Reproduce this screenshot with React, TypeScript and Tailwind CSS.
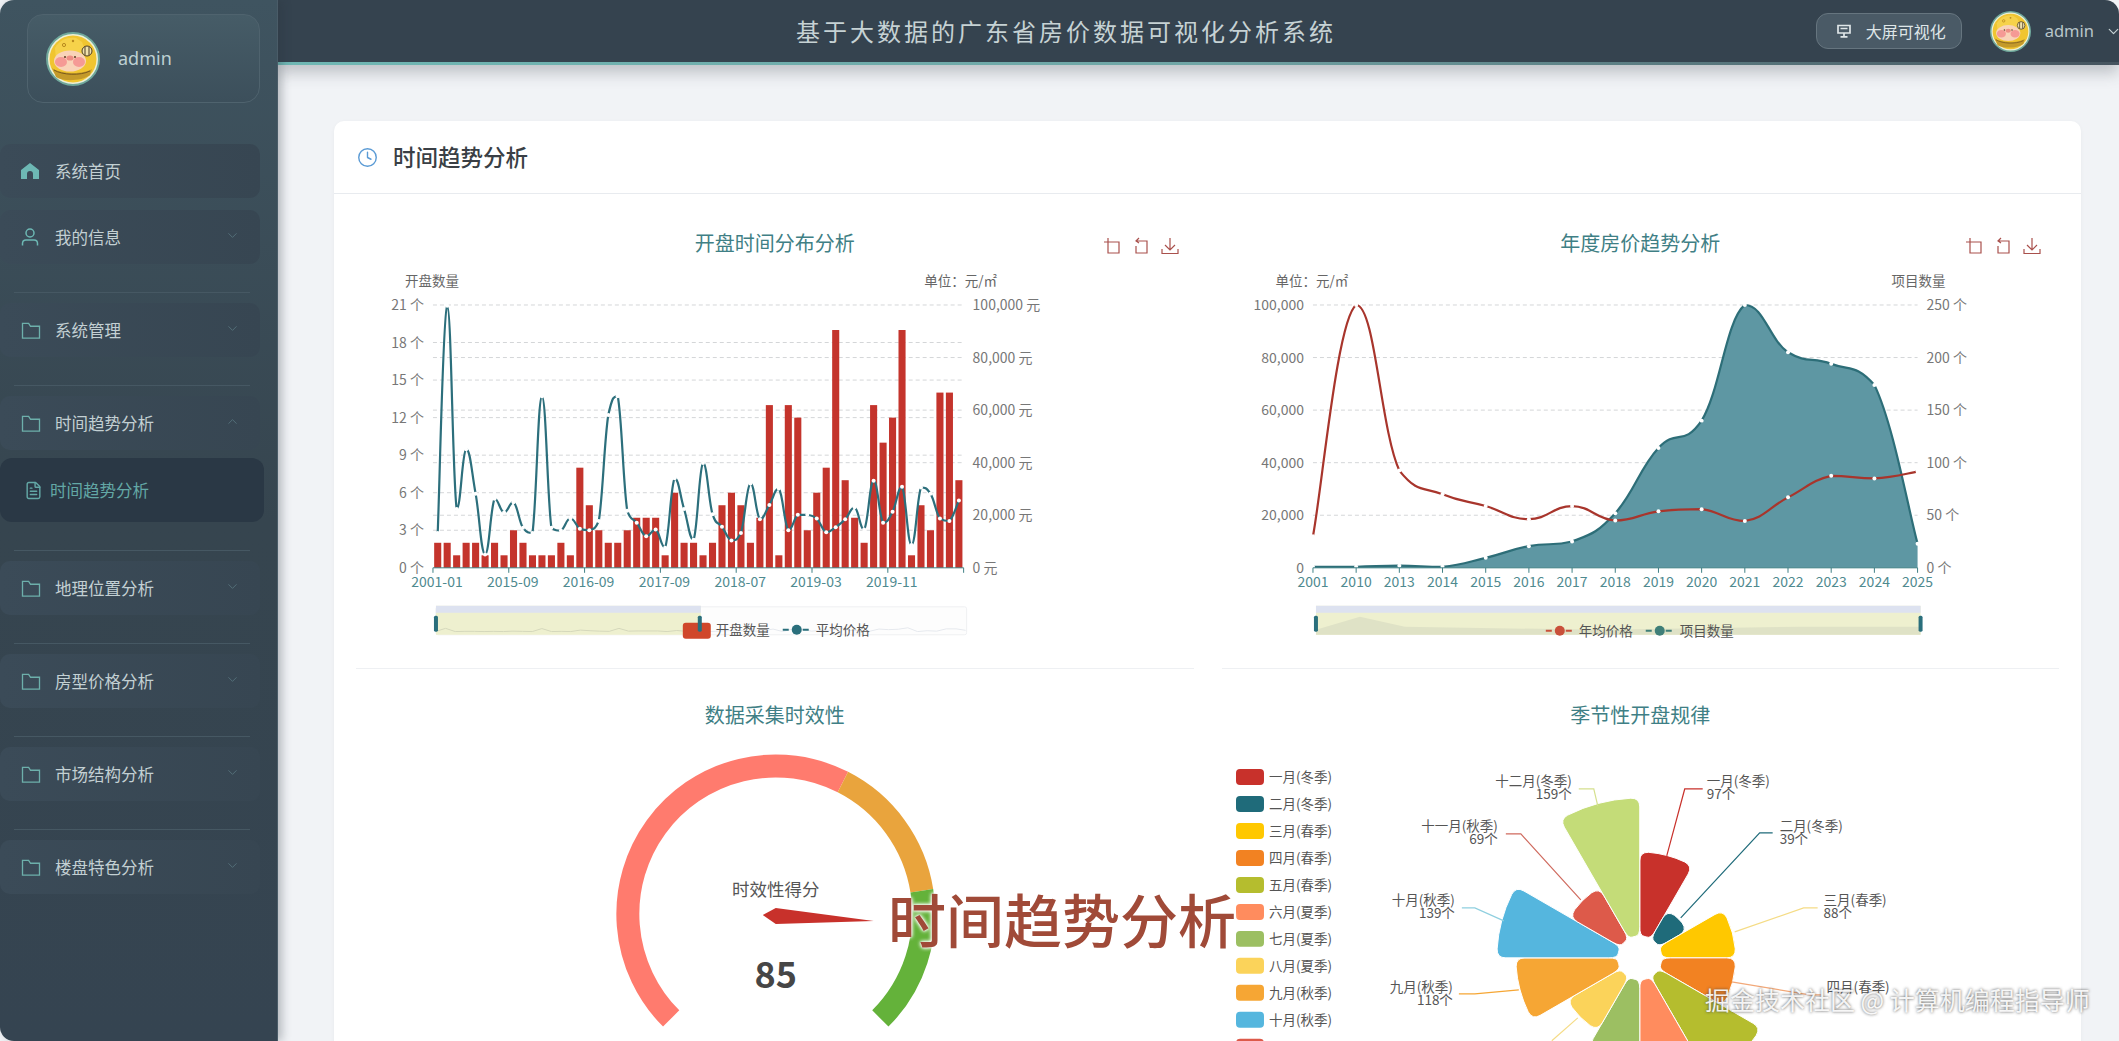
import { ChevronDown, ChevronUp, Clock, FileText } from "lucide-react";

type Pt = [number, number];

const clamp = (v: number, a: number, b: number) => Math.min(Math.max(a, b), Math.max(Math.min(a, b), v));

// catmull-rom, control points held between neighbours so peaks don't overshoot
function smoothPath(pts: Pt[], t = 0.22) {
  let d = `M${pts[0][0]} ${pts[0][1]}`;
  for (let i = 0; i < pts.length - 1; i++) {
    const p0 = pts[Math.max(i - 1, 0)];
    const p1 = pts[i];
    const p2 = pts[i + 1];
    const p3 = pts[Math.min(i + 2, pts.length - 1)];
    const c1x = p1[0] + (p2[0] - p0[0]) * t;
    const c1y = clamp(p1[1] + (p2[1] - p0[1]) * t, p1[1], p2[1]);
    const c2x = p2[0] - (p3[0] - p1[0]) * t;
    const c2y = clamp(p2[1] - (p3[1] - p1[1]) * t, p1[1], p2[1]);
    d += ` C${c1x} ${c1y} ${c2x} ${c2y} ${p2[0]} ${p2[1]}`;
  }
  return d;
}

const TOP = 305;
const BOTTOM = 568;

const bars = [2, 2, 1, 2, 2, 1, 2, 1, 3, 2, 1, 1, 1, 2, 1, 8, 5, 3, 2, 2, 3, 4, 4, 4, 1, 6, 2, 2, 1, 2, 5, 6, 5, 2, 4, 13, 1, 13, 12, 3, 6, 8, 19, 7, 4, 2, 13, 10, 12, 19, 1, 5, 3, 14, 14, 7];
const priceRaw = [1205, 540, 1135, 960, 1090, 1268, 1105, 1145, 1115, 1190, 1205, 805, 1190, 1198, 1162, 1193, 1197, 1170, 860, 805, 1140, 1175, 1215, 1195, 1248, 1045, 1135, 1225, 1000, 1150, 1187, 1227, 1205, 1060, 1165, 1123, 1075, 1197, 1152, 1152, 1163, 1203, 1188, 1165, 1130, 1195, 1052, 1175, 1143, 1070, 1240, 1072, 1090, 1163, 1170, 1110];
const leftTicks = ["21 个", "18 个", "15 个", "12 个", "9 个", "6 个", "3 个", "0 个"];
const rightTicks = ["100,000 元", "80,000 元", "60,000 元", "40,000 元", "20,000 元", "0 元"];
const monthLabels = ["2001-01", "2015-09", "2016-09", "2017-09", "2018-07", "2019-03", "2019-11"];

const years = ["2001", "2010", "2013", "2014", "2015", "2016", "2017", "2018", "2019", "2020", "2021", "2022", "2023", "2024", "2025"];
const yearPrice = [12, 100, 37, 28, 23.5, 18.5, 23.5, 18, 21.5, 22.3, 17.8, 26.8, 35, 34, 36.6];
const yearCount = [1, 1, 2, 1, 9.5, 20.6, 25, 52, 114, 140, 250, 205, 194, 174, 23];

const roseData = [
  { name: "一月(冬季)", r: 106, color: "#c8312b" },
  { name: "二月(冬季)", r: 55, color: "#1f6b7a" },
  { name: "三月(春季)", r: 96, color: "#ffc800" },
  { name: "四月(春季)", r: 96, color: "#f28222" },
  { name: "五月(春季)", r: 140, color: "#b5bd2e" },
  { name: "六月(夏季)", r: 112, color: "#ff8c5e" },
  { name: "七月(夏季)", r: 102, color: "#9cbf62" },
  { name: "八月(夏季)", r: 84, color: "#fbd35a" },
  { name: "九月(秋季)", r: 124, color: "#f6a634" },
  { name: "十月(秋季)", r: 143, color: "#55b6de" },
  { name: "十一月(秋季)", r: 81, color: "#dd5a4a" },
  { name: "十二月(冬季)", r: 160, color: "#c4dc78" },
];

const roseLabels = [
  { line: "1667,856 1685,789 1703,789", color: "#c8312b", x: 1707, y: 786, anchor: "start", a: "一月(冬季)", b: "97个" },
  { line: "1681,918 1760,833 1773,833", color: "#1f6b7a", x: 1780, y: 831, anchor: "start", a: "二月(冬季)", b: "39个" },
  { line: "1735,932 1804,908 1818,908", color: "#f5dc86", x: 1824, y: 905, anchor: "start", a: "三月(春季)", b: "88个" },
  { line: "1732,982 1810,995 1822,995", color: "#f2a878", x: 1827, y: 992, anchor: "start", a: "四月(春季)", b: "" },
  { line: "1519,990 1475,994 1459,994", color: "#f6a634", x: 1453, y: 992, anchor: "end", a: "九月(秋季)", b: "118个" },
  { line: "1504,921 1475,908 1462,908", color: "#8fcfdf", x: 1455, y: 905, anchor: "end", a: "十月(秋季)", b: "139个" },
  { line: "1581,900 1521,834 1506,834", color: "#cf6a5e", x: 1498, y: 831, anchor: "end", a: "十一月(秋季)", b: "69个" },
  { line: "1598,806 1594,789 1579,789", color: "#d5e08e", x: 1572, y: 786, anchor: "end", a: "十二月(冬季)", b: "159个" },
];

const menu = [
  { label: "地理位置分析" },
  { label: "房型价格分析" },
  { label: "市场结构分析" },
  { label: "楼盘特色分析" },
];

function Avatar({ className }: { className: string }) {
  return (
    <svg viewBox="0 0 54 54" className={className}>
      <circle cx="27" cy="27" r="26" fill="#eef0d6" stroke="#6fa89c" strokeWidth="2" />
      <circle cx="27" cy="27" r="23.5" fill="#f0c530" />
      <path d="M9 16C14 7 22 5 30 6l6 4 4 10-2 8H10z" fill="#f6d24a" />
      <circle cx="18" cy="13" r="1.6" fill="none" stroke="#b98a1e" />
      <circle cx="27" cy="9" r="1.2" fill="#b98a1e" />
      <path d="M6 36c8 6 30 7 40 1l-2 6c-8 6-26 7-34 2z" fill="#c49a2a" />
      <path d="M8 38c8 5 26 6 36 1" fill="none" stroke="#7a5a1c" strokeWidth="1" />
      <ellipse cx="24" cy="29" rx="16" ry="10.5" fill="#f9d3b8" />
      <ellipse cx="15" cy="30" rx="6" ry="5" fill="#f59a95" />
      <ellipse cx="33" cy="30" rx="6" ry="5" fill="#f59a95" />
      <ellipse cx="24" cy="26" rx="3.6" ry="2.6" fill="#ee8f85" />
      <circle cx="19" cy="25" r="1" fill="#5a3a22" />
      <circle cx="29" cy="25" r="1" fill="#5a3a22" />
      <circle cx="41" cy="19" r="5" fill="#f0e2ac" stroke="#4a3a22" />
      <path d="M39 15v8M43 15v8" stroke="#4a3a22" />
    </svg>
  );
}

function FolderIcon() {
  return (
    <svg viewBox="0 0 20 18" className="h-[17px] w-[20px] shrink-0" fill="none" stroke="#6db0ab" strokeWidth="1.4">
      <path d="M1 1.5h6.5l2 3H19v12.5H1z" />
    </svg>
  );
}

function MenuItem({ label, icon, open, arrow = true }: { label: string; icon: React.ReactNode; open?: boolean; arrow?: boolean }) {
  return (
    <div className="flex h-[54px] w-[260px] items-center rounded-[10px] bg-gradient-to-r from-[#3b4b58] to-[#374652] pl-[21px] pr-[20px] text-[16.5px] text-[#c3d0d3]">
      <span className="flex w-[34px] shrink-0 items-center">{icon}</span>
      <span className="flex-1">{label}</span>
      {arrow &&
        (open ? (
          <ChevronUp size={15} strokeWidth={1.5} className="mb-[4px] text-[#54707a]" />
        ) : (
          <ChevronDown size={15} strokeWidth={1.5} className="mb-[4px] text-[#54707a]" />
        ))}
    </div>
  );
}

function Divider() {
  return <div className="mb-[10px] ml-[14px] h-px w-[236px] bg-[#465863]" />;
}

function Sidebar() {
  return (
    <aside className="z-20 flex h-full w-[278px] shrink-0 flex-col rounded-l-[14px] border-r border-[#4a5c68] bg-gradient-to-b from-[#3f5460] via-[#36454f] to-[#354451] pt-[14px] shadow-[4px_0_10px_rgba(40,50,60,0.3)]">
      <div className="ml-[27px] flex h-[89px] w-[233px] items-center gap-[18px] rounded-2xl border border-[#4f636e] bg-gradient-to-b from-[#465c67] to-[#3c4f5b] pl-[18px]">
        <Avatar className="h-[54px] w-[54px]" />
        <span className="font-['Noto_Sans',sans-serif] text-[18px] text-[#bdd0d3]">admin</span>
      </div>
      <div className="mt-[41px] flex flex-col">
        <MenuItem
          label="系统首页"
          arrow={false}
          icon={
            <svg viewBox="0 0 18 16" className="h-[16px] w-[18px]" fill="#6db8b4">
              <path d="M9 0l9 7v9h-6v-5a3 3 0 0 0-6 0v5H0V7z" />
            </svg>
          }
        />
        <div className="h-[12px]" />
        <MenuItem
          label="我的信息"
          icon={
            <svg viewBox="0 0 18 18" className="h-[18px] w-[18px]" fill="none" stroke="#6db8b4" strokeWidth="1.5">
              <circle cx="9" cy="5" r="4" />
              <path d="M1.5 17.5v-2c0-2 1.5-3.5 3.5-3.5h8c2 0 3.5 1.5 3.5 3.5v2" />
            </svg>
          }
        />
        <div className="h-[28px]" />
        <Divider />
        <MenuItem label="系统管理" icon={<FolderIcon />} />
        <div className="h-[28px]" />
        <Divider />
        <MenuItem label="时间趋势分析" open icon={<FolderIcon />} />
        <div className="mt-[8px] flex h-[64px] w-[264px] items-center rounded-xl bg-[#2a3845] pl-[24px] text-[16.5px] text-[#63a8a6]">
          <FileText size={19} strokeWidth={1.8} className="mr-[7px]" />
          时间趋势分析
        </div>
        <div className="h-[28px]" />
        {menu.map((m) => (
          <div key={m.label}>
            <Divider />
            <MenuItem label={m.label} icon={<FolderIcon />} />
            <div className="h-[28px]" />
          </div>
        ))}
      </div>
    </aside>
  );
}

function Header() {
  return (
    <header className="z-10 shrink-0 shadow-[0_8px_14px_rgba(60,70,80,0.28)]">
      <div className="flex h-[62px] items-center rounded-tr-[14px] bg-[#35434f] pl-[518px]">
        <h1 className="flex-1 text-[24px] tracking-[3px] text-[#c6d2d4]">基于大数据的广东省房价数据可视化分析系统</h1>
        <div className="flex h-[36px] w-[146px] items-center rounded-xl border border-[#66757f] bg-[#4a5a66] pl-[20px] text-[16px] text-[#dfe6e8]">
          <svg viewBox="0 0 14 14" className="mr-[15px] h-[14px] w-[14px]" fill="none" stroke="#dfe6e8" strokeWidth="1.7">
            <path d="M1 1.5h12v7.5H1zM7 9v4M3.5 12.8h7M3.5 4.5h7" />
          </svg>
          大屏可视化
        </div>
        <Avatar className="ml-[28px] h-[41px] w-[41px]" />
        <span className="ml-[14px] font-['Noto_Sans',sans-serif] text-[16.5px] text-[#b9c6ca]">admin</span>
        <ChevronDown size={17} strokeWidth={1.7} className="-mr-[3px] ml-[11px] text-[#c6d2d4]" />
      </div>
      <div className="h-[3px] bg-gradient-to-r from-[#6fb7b4] via-[#70a5a6] to-[#46545f]" />
    </header>
  );
}

function Toolbox({ right }: { right: string }) {
  return (
    <div className={`absolute top-[21px] flex gap-[11px] ${right}`}>
      <svg viewBox="0 0 18 18" className="h-[18px] w-[18px]" fill="none" stroke="#a9504c" strokeWidth="1.2">
        <path d="M5 1v15h11V5H1" />
      </svg>
      <svg viewBox="0 0 18 18" className="h-[18px] w-[18px]" fill="none" stroke="#a9504c" strokeWidth="1.2">
        <path d="M7 1L4 4l3 2M4 4h11v12H4V9" />
      </svg>
      <svg viewBox="0 0 18 18" className="h-[18px] w-[18px]" fill="none" stroke="#a9504c" strokeWidth="1.2">
        <path d="M9 1v12M4 8l5 5 5-5M1 12v4.5h16V12" />
      </svg>
    </div>
  );
}

function Panel({ title, tools, children }: { title: string; tools?: React.ReactNode; children: React.ReactNode }) {
  return (
    <section className="h-[453px] border-b border-[#eef0f3]">
      <div className="relative flex h-[54px] items-center justify-center text-[20px] text-[#3f7f85]">
        {title}
        {tools}
      </div>
      {children}
    </section>
  );
}

function Grid({ x1, x2, ys }: { x1: number; x2: number; ys: number[] }) {
  return (
    <>
      {ys.map((y) => (
        <line key={y} x1={x1} x2={x2} y1={y} y2={y} stroke="#d4d6d8" strokeDasharray="4 3" />
      ))}
    </>
  );
}

function OpeningChart() {
  const x1 = 433;
  const x2 = 964;
  const band = (x2 - x1) / bars.length;
  const h = BOTTOM - TOP;
  const leftYs = leftTicks.map((_, i) => TOP + (h * i) / 7);
  const rightYs = rightTicks.map((_, i) => TOP + (h * i) / 5);
  const pts: Pt[] = priceRaw.map((v, i) => [x1 + band * (i + 0.5), TOP + (h * (v - 538)) / (1307 - 538)]);
  const spark = bars.map((v, i) => `${436 + (i / 55) * 530},${634 - (v / 19) * 4 - (pts[i][1] < 400 ? 5 : 2)}`).join(" ");
  return (
    <svg viewBox="356 270 838 399" className="w-full text-[14px]">
      <text x="432" y="286" textAnchor="middle" fontSize="13.5" fill="#666">开盘数量</text>
      <text x="961" y="286" textAnchor="middle" fontSize="13.5" fill="#666">单位：元/㎡</text>
      <Grid x1={x1} x2={x2} ys={leftYs.slice(0, -1)} />
      <Grid x1={x1} x2={x2} ys={rightYs.slice(1, -1)} />
      {leftTicks.map((t, i) => (
        <text key={t} x="424" y={leftYs[i] + 5} textAnchor="end" fill="#777">{t}</text>
      ))}
      {rightTicks.map((t, i) => (
        <text key={t} x="973" y={rightYs[i] + 5} fill="#777">{t}</text>
      ))}
      {bars.map((v, i) => (
        <rect key={i} x={x1 + band * i + 1.2} y={BOTTOM - (v / 21) * h} width={band - 2.4} height={(v / 21) * h} fill="#c4342c" />
      ))}
      <path d={smoothPath(pts)} fill="none" stroke="#2c6f7c" strokeWidth="2.2" />
      {pts.map((p, i) => (
        <circle key={i} cx={p[0]} cy={p[1]} r="2" fill="#fff" />
      ))}
      <line x1={x1} x2={x2} y1={BOTTOM} y2={BOTTOM} stroke="#3f7f85" />
      {monthLabels.map((t, i) => (
        <g key={t}>
          <line x1={x1 + band * 8 * i} x2={x1 + band * 8 * i} y1={BOTTOM} y2={BOTTOM + 5} stroke="#3f7f85" />
          <text x={x1 + band * 8 * i + 4} y="587" textAnchor="middle" fill="#4f8a8f">{t}</text>
        </g>
      ))}
      <line x1={x2} x2={x2} y1={BOTTOM} y2={BOTTOM + 5} stroke="#3f7f85" />
      <rect x="436" y="607" width="531" height="28" rx="2" fill="#fdfdfd" stroke="#eff0f2" />
      <polyline points={spark} fill="none" stroke="#e6e9ee" />
      <rect x="436" y="606" width="265" height="29" fill="#eef0cf" />
      <rect x="436" y="606" width="265" height="7" fill="#dde2f0" />
      <polyline points={spark.split(" ").slice(0, 28).join(" ")} fill="none" stroke="#d5d8bc" />
      <rect x="434" y="616" width="4" height="16" rx="1.5" fill="#2a6f7c" />
      <rect x="683" y="623" width="28" height="16" rx="3" fill="#d0472b" />
      <rect x="698" y="616" width="4" height="16" rx="1.5" fill="#2a6f7c" />
      <text x="716" y="635" fontSize="13.5" fill="#555">开盘数量</text>
      <line x1="783" x2="811" y1="630" y2="630" stroke="#2a6f7c" strokeWidth="2" strokeDasharray="6 4" />
      <circle cx="797" cy="630" r="5" fill="#2a6f7c" />
      <text x="816" y="635" fontSize="13.5" fill="#555">平均价格</text>
    </svg>
  );
}

function YearChart() {
  const x1 = 1313;
  const x2 = 1918;
  const h = BOTTOM - TOP;
  const step = (x2 - x1) / (years.length - 1);
  const ys = [0, 1, 2, 3, 4, 5].map((i) => TOP + (h * i) / 5);
  const price: Pt[] = yearPrice.map((v, i) => [x1 + step * i, BOTTOM - (v / 100) * h]);
  const count: Pt[] = yearCount.map((v, i) => [x1 + step * i, BOTTOM - (v / 250) * h]);
  return (
    <svg viewBox="1222 270 838 399" className="w-full text-[14px]">
      <text x="1312" y="286" textAnchor="middle" fontSize="13.5" fill="#666">单位：元/㎡</text>
      <text x="1919" y="286" textAnchor="middle" fontSize="13.5" fill="#666">项目数量</text>
      <Grid x1={x1} x2={x2} ys={ys.slice(0, -1)} />
      {["100,000", "80,000", "60,000", "40,000", "20,000", "0"].map((t, i) => (
        <text key={t} x="1304" y={ys[i] + 5} textAnchor="end" fill="#777">{t}</text>
      ))}
      {["250 个", "200 个", "150 个", "100 个", "50 个", "0 个"].map((t, i) => (
        <text key={t} x="1927" y={ys[i] + 5} fill="#777">{t}</text>
      ))}
      <path d={`${smoothPath(count)} L${x2} ${BOTTOM} L${x1} ${BOTTOM} Z`} fill="#5e97a3" />
      <path d={smoothPath(count)} fill="none" stroke="#2d6e78" strokeWidth="2.2" />
      <path d={smoothPath(price)} fill="none" stroke="#a8352c" strokeWidth="2.2" />
      {price.concat(count).map((p, i) => (
        <circle key={i} cx={p[0]} cy={p[1]} r="2" fill="#fff" />
      ))}
      <line x1={x1} x2={x2} y1={BOTTOM} y2={BOTTOM} stroke="#3f7f85" />
      {years.map((t, i) => (
        <g key={t}>
          <line x1={x1 + step * i} x2={x1 + step * i} y1={BOTTOM} y2={BOTTOM + 5} stroke="#3f7f85" />
          <text x={x1 + step * i} y="587" textAnchor="middle" fill="#4f8a8f">{t}</text>
        </g>
      ))}
      <rect x="1316" y="606" width="605" height="29" fill="#eef0cf" />
      <rect x="1316" y="606" width="605" height="7" fill="#dde2f0" />
      <path d="M1316 630L1360 617L1405 627L1600 630L1800 627L1921 627V635H1316Z" fill="#dfe2c6" />
      <rect x="1314" y="616" width="4" height="16" rx="1.5" fill="#2a6f7c" />
      <rect x="1919" y="616" width="4" height="16" rx="1.5" fill="#2a6f7c" />
      <line x1="1546" x2="1574" y1="631" y2="631" stroke="#c9503a" strokeWidth="2" strokeDasharray="6 4" />
      <circle cx="1560" cy="631" r="5" fill="#c9503a" />
      <text x="1579" y="636" fontSize="13.5" fill="#555">年均价格</text>
      <line x1="1646" x2="1674" y1="631" y2="631" stroke="#3f7f78" strokeWidth="2" strokeDasharray="6 4" />
      <circle cx="1660" cy="631" r="5" fill="#3f7f78" />
      <text x="1680" y="636" fontSize="13.5" fill="#555">项目数量</text>
    </svg>
  );
}

const polar = (cx: number, cy: number, r: number, deg: number) => {
  const a = (deg * Math.PI) / 180;
  return `${cx + r * Math.cos(a)} ${cy - r * Math.sin(a)}`;
};

function GaugeChart() {
  const segs = [
    { from: 225, to: 63, color: "#ff7b6e" },
    { from: 63, to: 9, color: "#e9a43d" },
    { from: 9, to: -45, color: "#64b23a" },
  ];
  return (
    <svg viewBox="356 742 838 399" className="w-full">
      {segs.map((s) => (
        <path
          key={s.color}
          d={`M${polar(776, 914, 148, s.from)} A148 148 0 ${s.from - s.to > 180 ? 1 : 0} 1 ${polar(776, 914, 148, s.to)}`}
          fill="none"
          stroke={s.color}
          strokeWidth="23"
        />
      ))}
      <text x="776" y="896" textAnchor="middle" fontSize="17.5" fill="#555">时效性得分</text>
      <polygon points="874,921 776,924 763,915 776,908" fill="#c8312b" />
      <text x="776" y="988" textAnchor="middle" fontSize="36" fontWeight="700" fill="#464646">85</text>
    </svg>
  );
}

function RoseChart() {
  const cx = 1640;
  const cy = 958;
  const ri = 22;
  const pos = (r: number, a: number): Pt => [cx + r * Math.sin(a), cy - r * Math.cos(a)];
  const str = (p: Pt) => `${p[0]} ${p[1]}`;
  const sector = (a0: number, a1: number, ro: number) => {
    const c = 9;
    const o = c / ro;
    const n = c / ri / 2;
    return [
      `M${str(pos(ri + c, a0))}`,
      `L${str(pos(ro - c, a0))}`,
      `Q${str(pos(ro, a0))} ${str(pos(ro, a0 + o))}`,
      `A${ro} ${ro} 0 0 1 ${str(pos(ro, a1 - o))}`,
      `Q${str(pos(ro, a1))} ${str(pos(ro - c, a1))}`,
      `L${str(pos(ri + c, a1))}`,
      `Q${str(pos(ri, a1))} ${str(pos(ri, a1 - n))}`,
      `A${ri} ${ri} 0 0 0 ${str(pos(ri, a0 + n))}`,
      `Q${str(pos(ri, a0))} ${str(pos(ri + c, a0))}`,
      "Z",
    ].join(" ");
  };
  return (
    <svg viewBox="1222 742 838 399" className="w-full text-[14px]">
      {roseData.map((d, i) => (
        <g key={d.name}>
          <rect x="1236" y={769 + i * 27} width="28" height="16" rx="4" fill={d.color} />
          {i < 10 && <text x="1269" y={782 + i * 27} fontSize="13.5" fill="#555">{d.name}</text>}
        </g>
      ))}
      {roseData.map((d, i) => {
        const step = Math.PI / 6;
        return <path key={d.name} d={sector(i * step, (i + 1) * step, d.r)} fill={d.color} stroke="#fff" strokeWidth="1" />;
      })}
      {roseLabels.map((l) => (
        <g key={l.a}>
          <polyline points={l.line} fill="none" stroke={l.color} strokeWidth="1.2" />
          <text x={l.x} y={l.y} textAnchor={l.anchor as "start" | "end"} fontSize="13.5" fill="#555">{l.a}</text>
          <text x={l.x} y={l.y + 13} textAnchor={l.anchor as "start" | "end"} fontSize="13.5" fill="#555">{l.b}</text>
        </g>
      ))}
      <polyline points="1578,1018 1552,1041" fill="none" stroke="#f5dc86" strokeWidth="1.2" />
    </svg>
  );
}

export default function App() {
  return (
    <div className="relative flex h-screen w-full overflow-hidden bg-[#f1f3f6] font-['Noto_Sans_CJK_SC','Noto_Sans',sans-serif]">
      <Sidebar />
      <main className="flex min-w-0 flex-1 flex-col">
        <Header />
        <div className="pl-[56px] pr-[38px] pt-[56px]">
          <div className="rounded-[10px] bg-white shadow-[0_1px_4px_rgba(0,0,0,0.04)]">
            <div className="flex h-[73px] items-center border-b border-[#e8ebef] pl-[23px]">
              <Clock size={21} strokeWidth={1.6} className="text-[#5b9bd5]" />
              <h2 className="ml-[15px] text-[22.5px] font-medium text-[#3a3f45]">时间趋势分析</h2>
            </div>
            <div className="grid grid-cols-2 gap-x-[28px] gap-y-[19px] px-[22px] pt-[22px]">
              <Panel title="开盘时间分布分析" tools={<Toolbox right="right-[15px]" />}>
                <OpeningChart />
              </Panel>
              <Panel title="年度房价趋势分析" tools={<Toolbox right="right-[18px]" />}>
                <YearChart />
              </Panel>
              <Panel title="数据采集时效性">
                <GaugeChart />
              </Panel>
              <Panel title="季节性开盘规律">
                <RoseChart />
              </Panel>
            </div>
          </div>
        </div>
      </main>
      <div className="absolute left-[888px] top-[878px] z-30 text-[58px] leading-[80px] font-medium text-[#a04a38] [text-shadow:0_0_4px_#fff,0_0_4px_#fff,0_0_2px_#fff]">
        时间趋势分析
      </div>
      <div className="absolute left-[1705px] top-[980px] z-30 text-[25px] leading-[38px] text-white/90 [text-shadow:0_0_3px_rgba(60,60,60,0.9)]">
        掘金技术社区 @ 计算机编程指导师
      </div>
    </div>
  );
}
